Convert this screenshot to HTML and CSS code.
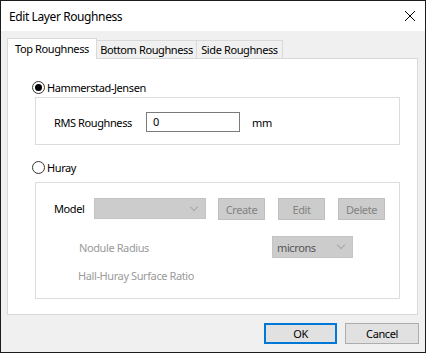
FILE: index.html
```html
<!DOCTYPE html>
<html>
<head>
  <meta charset='UTF-8'>
  <title>Edit Layer Roughness</title>
  <link rel="stylesheet" href="styles.css">
</head>
<body>
  <div class='window'>
    <div class='titlebar'>
      <span class='title'>Edit Layer Roughness</span>
      <svg class='close' width='12' height='12' viewBox='0 0 12 12'>
        <path d='M1 1 L11 11 M11 1 L1 11' stroke='#000' stroke-width='1' fill='none'/>
      </svg>
    </div>

    <div class='content'>
      <div class='tabs'>
        <div class='tab active'>Top Roughness</div>
        <div class='tab t2'>Bottom Roughness</div>
        <div class='tab t3'>Side Roughness</div>
      </div>

      <div class='panel'>
        <div class='radio-row first'>
          <span class='radio checked'></span>
          <span>Hammerstad-Jensen</span>
        </div>
        <div class='group g1'>
          <div class='rms-row'>
            <span class='lbl-rms'>RMS Roughness</span>
            <div class='input'>0</div>
            <span class='unit'>mm</span>
          </div>
        </div>

        <div class='radio-row second'>
          <span class='radio'></span>
          <span>Huray</span>
        </div>
        <div class='group g2'>
          <div class='model-row'>
            <span class='lbl-model'>Model</span>
            <div class='combo model-combo'><span></span><span class='chev'></span></div>
            <div class='btn-dis'>Create</div>
            <div class='btn-dis'>Edit</div>
            <div class='btn-dis'>Delete</div>
          </div>
          <div class='nodule-row'>
            <span class='lbl-dis lbl-nodule'>Nodule Radius</span>
            <div class='combo units-combo'><span>microns</span><span class='chev'></span></div>
          </div>
          <div class='hall-row'>
            <span class='lbl-dis'>Hall-Huray Surface Ratio</span>
          </div>
        </div>
      </div>

      <div class='footer'>
        <div class='btn ok'>OK</div>
        <div class='btn'>Cancel</div>
      </div>
    </div>
  </div>
</body>
</html>
```

FILE: styles.css
```css
body { margin: 0; font-family: "Noto Sans", sans-serif; font-size: 11px; letter-spacing: -0.4px; color: #000; background: #fff; }
.window { width: 426px; height: 353px; box-sizing: border-box; border: 1px solid #1c1c1c; background: #f0f0f0; display: flex; flex-direction: column; }
.titlebar { height: 30px; background: #fff; display: flex; align-items: center; justify-content: space-between; padding: 0 9px 0 8px; }
.title { font-size: 12px; }
.close { display: block; }

.content { padding: 7px 7px 0 6px; }
.tabs { display: flex; align-items: flex-end; height: 20px; }
.tab { box-sizing: border-box; border: 1px solid #d9d9d9; border-bottom: none; height: 18px; display: flex; align-items: center; justify-content: center; background: #f0f0f0; }
.tab.active { width: 90px; height: 21px; margin-bottom: -1px; background: #fff; position: relative; z-index: 1; padding-bottom: 1px; }
.t2 { width: 101px; margin-left: -1px; }
.t3 { width: 87px; margin-left: -1px; }

.panel { box-sizing: border-box; height: 257px; background: #fff; border: 1px solid #d9d9d9; padding-left: 24px; }
.radio-row { display: flex; align-items: center; gap: 2px; height: 13px; }
.radio-row.first { margin-top: 22px; }
.radio-row.second { margin-top: 16px; }
.radio { width: 13px; height: 13px; box-sizing: border-box; border: 1px solid #333; border-radius: 50%; display: flex; align-items: center; justify-content: center; }
.radio.checked::after { content: ''; width: 7px; height: 7px; border-radius: 50%; background: #000; }

.group { box-sizing: border-box; width: 365px; margin-left: 3px; border: 1px solid #dcdcdc; padding-left: 18px; }
.g1 { height: 48px; margin-top: 3px; padding-top: 14px; }
.g2 { height: 117px; margin-top: 8px; padding-top: 15px; }

.rms-row { display: flex; align-items: center; height: 20px; }
.lbl-rms { width: 92px; }
.input { box-sizing: border-box; width: 94px; height: 20px; border: 1px solid #7a7a7a; padding: 0 0 0 6px; line-height: 18px; }
.unit { margin-left: 12px; }

.model-row { display: flex; align-items: flex-start; height: 22px; }
.lbl-model { width: 40px; line-height: 21px; }
.combo { box-sizing: border-box; background: #cccccc; border: 1px solid #c4c4c4; display: flex; align-items: center; justify-content: space-between; padding: 0 8px 0 4px; color: #555; }
.model-combo { width: 112px; height: 21px; }
.chev { width: 5px; height: 5px; border-right: 1px solid #a8a8a8; border-bottom: 1px solid #a8a8a8; transform: rotate(45deg); margin-top: -4px; }
.btn-dis { box-sizing: border-box; width: 47px; height: 22px; background: #cccccc; border: 1px solid #bfbfbf; color: #838383; display: flex; align-items: center; justify-content: center; }
.model-combo + .btn-dis { margin-left: 12px; }
.btn-dis + .btn-dis { margin-left: 13px; }

.nodule-row { display: flex; align-items: center; margin-top: 16px; height: 22px; padding-left: 25px; }
.lbl-nodule { width: 193px; }
.units-combo { width: 81px; height: 22px; }
.lbl-dis { color: #9a9a9a; }
.hall-row { margin-top: 10px; line-height: 15px; padding-left: 24px; }

.footer { display: flex; justify-content: flex-end; gap: 8px; margin-top: 8px; padding-right: -1px; margin-right: -1px; }
.btn { box-sizing: border-box; width: 74px; height: 21px; background: #e1e1e1; border: 1px solid #adadad; display: flex; align-items: center; justify-content: center; }
.btn.ok { width: 73px; border: 2px solid #0078d7; }
```
